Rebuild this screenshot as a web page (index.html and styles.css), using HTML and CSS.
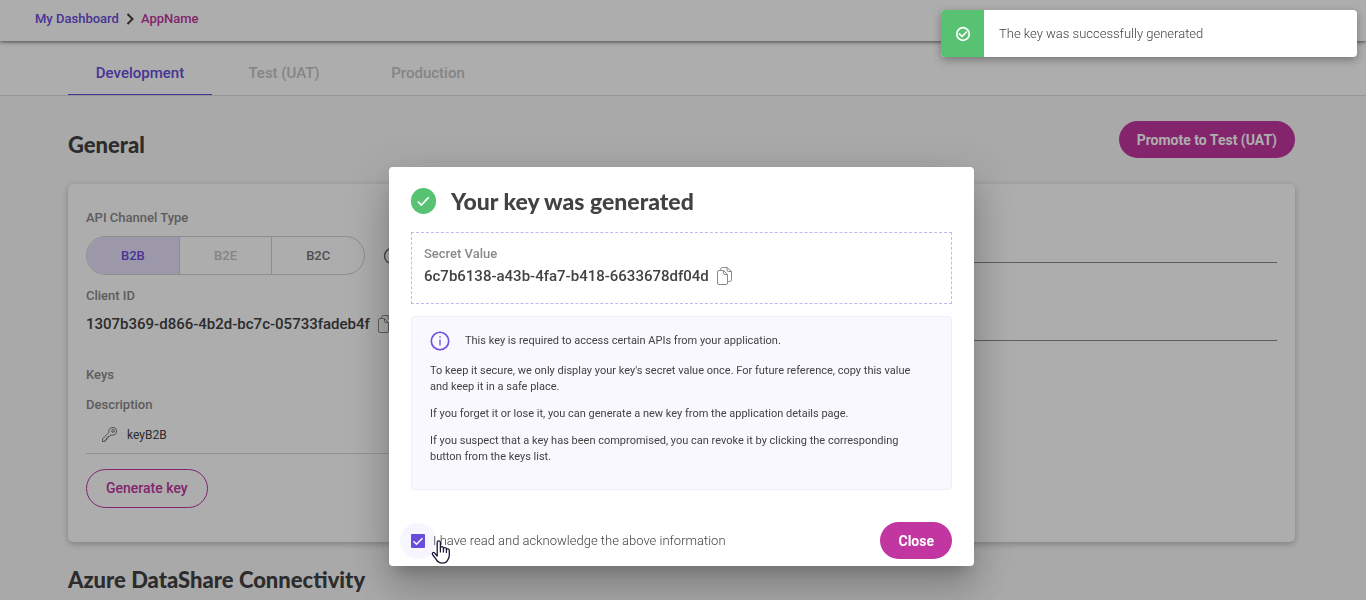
FILE: index.html
```
<!DOCTYPE html>
<html lang="en">
<head>
    <meta charset="UTF-8">
    <meta name="viewport" content="width=device-width, initial-scale=1">
    <title>AppName</title>
    <link rel="stylesheet" href="styles.css">
</head>
<body>
<header class="header">
    <nav class="breadcrumb" aria-label="Breadcrumb">
        <a href="#dashboard">My Dashboard</a>
        <svg width="8" height="12" viewBox="0 0 8 12"><path d="M1.5 1l5 5-5 5" fill="none" stroke="#424242" stroke-width="2"/></svg>
        <a href="#app" class="current">AppName</a>
    </nav>
</header>
<div class="tabs" role="tablist">
    <button type="button" class="tab active" role="tab" aria-selected="true">Development</button>
    <button type="button" class="tab" role="tab" disabled>Test (UAT)</button>
    <button type="button" class="tab" role="tab" disabled>Production</button>
</div>
<main class="content">
    <div class="section-head">
        <h2>General</h2>
        <button type="button" class="btn btn-primary">Promote to Test (UAT)</button>
    </div>
    <section class="card">
        <div class="card-left">
            <div class="label">API Channel Type</div>
            <div class="channel">
                <div class="toggle">
                    <button type="button" class="selected" aria-pressed="true">B2B</button>
                    <button type="button" disabled>B2E</button>
                    <button type="button" aria-pressed="false">B2C</button>
                </div>
                <svg width="18" height="18" viewBox="0 0 18 18" fill="none" stroke="#616161" stroke-width="1.3"><circle cx="9" cy="9" r="7.5"/><path d="M9 8v5M9 5v1.3"/></svg>
            </div>
            <div class="label">Client ID</div>
            <div class="value-row">
                <span class="value">1307b369-d866-4b2d-bc7c-05733fadeb4f</span>
                <button type="button" class="icon-btn" aria-label="Copy client ID">
                    <svg width="15" height="18" viewBox="0 0 15 18" fill="none" stroke="#8a8a8a"><path d="M3.5 3.5v-1a2 2 0 0 1 2-2H10l4.5 4v8a2 2 0 0 1-2 2H11M10 .5V3a1.5 1.5 0 0 0 1.5 1.5h3M2 3.5h4.5l4 4V16A1.5 1.5 0 0 1 9 17.5H2A1.5 1.5 0 0 1 .5 16V5A1.5 1.5 0 0 1 2 3.5zM6.5 3.5V6A1.5 1.5 0 0 0 8 7.5h2.5"/></svg>
                </button>
            </div>
            <div class="label keys-label">Keys</div>
            <table class="keys">
                <thead>
                    <tr><th class="label">Description</th></tr>
                </thead>
                <tbody>
                    <tr>
                        <td>
                            <div class="key-name">
                                <svg width="15" height="15" viewBox="0 0 15 15" fill="none" stroke="#757575"><path d="M8 1.5Q9 .5 11 .5q3.500 0 3.500 3.500 0 2-1.200 3.200-1.800 1.600-4.300.8L7.500 9.500H6v1.700H4.500V13H3v1.500H.5V12l6.300-6.300Q6.200 3.200 8 1.500z"/><circle cx="11" cy="4" r="1.300"/></svg>
                                <span>keyB2B</span>
                            </div>
                        </td>
                    </tr>
                </tbody>
            </table>
            <button type="button" class="btn btn-outline">Generate key</button>
        </div>
        <div class="card-right">
            <input type="text" class="field" aria-label="Application name">
            <input type="text" class="field" aria-label="Application description">
        </div>
    </section>
    <h2>Azure DataShare Connectivity</h2>
</main>

<div class="overlay">
    <div class="modal" role="dialog" aria-modal="true" aria-labelledby="modal-title">
        <div class="modal-title">
            <svg width="25" height="26" viewBox="0 0 25 26"><rect width="25" height="26" rx="12.5" fill="#57c271"/><path d="M6.800 13.500l3.500 3.500 7.400-7.700" fill="none" stroke="#fff" stroke-width="1.700"/></svg>
            <h2 id="modal-title">Your key was generated</h2>
        </div>
        <div class="secret">
            <div class="label">Secret Value</div>
            <div class="value-row">
                <span class="value">6c7b6138-a43b-4fa7-b418-6633678df04d</span>
                <button type="button" class="icon-btn" aria-label="Copy secret value">
                    <svg width="15" height="18" viewBox="0 0 15 18" fill="none" stroke="#8a8a8a"><path d="M3.5 3.5v-1a2 2 0 0 1 2-2H10l4.5 4v8a2 2 0 0 1-2 2H11M10 .5V3a1.5 1.5 0 0 0 1.5 1.5h3M2 3.5h4.5l4 4V16A1.5 1.5 0 0 1 9 17.5H2A1.5 1.5 0 0 1 .5 16V5A1.5 1.5 0 0 1 2 3.5zM6.5 3.5V6A1.5 1.5 0 0 0 8 7.5h2.5"/></svg>
                </button>
            </div>
        </div>
        <div class="info">
            <div class="info-head">
                <svg width="20" height="20" viewBox="0 0 20 20" fill="none" stroke="#6a4ddb"><circle cx="10" cy="10" r="8.700" stroke-width="1.600"/><path d="M10 8.500v6M10 5.200v1.600" stroke-width="1.300"/></svg>
                <span>This key is required to access certain APIs from your application.</span>
            </div>
            <p>To keep it secure, we only display your key's secret value once. For future reference, copy this value and keep it in a safe place.</p>
            <p>If you forget it or lose it, you can generate a new key from the application details page.</p>
            <p>If you suspect that a key has been compromised, you can revoke it by clicking the corresponding button from the keys list.</p>
        </div>
        <div class="modal-footer">
            <div class="ack">
                <input type="checkbox" id="ack" checked>
                <label for="ack">I have read and acknowledge the above information</label>
                <svg class="pointer" width="20" height="25" viewBox="0 0 20 25"><path d="M6.200 13.500V2.500a1.600 1.600 0 0 1 3.200 0V8a1.500 1.500 0 0 1 3 .3v.6a1.500 1.500 0 0 1 3 .4v.6a1.500 1.500 0 0 1 2.900.500v5.100c0 2-1 3.500-1.700 4.700-1 2-2.600 2.900-5.100 2.900-3.200 0-5-1.200-6.500-4L1.500 14.500c-.8-1.500.8-2.700 2-1.700l2.700 3.200z" fill="#fff" stroke="#1b1836" stroke-width="1.300" stroke-linejoin="round"/><path d="M9.400 8v4.500M12.400 9v3.500M15.400 10v3" stroke="#1b1836" stroke-width="1.200"/></svg>
            </div>
            <button type="button" class="btn btn-primary">Close</button>
        </div>
    </div>
</div>

<div class="toast" role="status">
    <div class="toast-icon">
        <svg width="16" height="16" viewBox="0 0 16 16" fill="none" stroke="#fff" stroke-width="1.700"><circle cx="8" cy="8" r="6.300"/><path d="M3.800 7.300l3.200 3.200 5-5"/></svg>
    </div>
    <div class="toast-text">The key was successfully generated</div>
</div>
</body>
</html>
```
FILE: styles.css
```
* {
    box-sizing: border-box;
    margin: 0;
    padding: 0;
}

body {
    background-color: #fafafa;
    color: #424242;
    font-family: Roboto, "Liberation Sans", sans-serif;
    font-size: 14px;
    line-height: 20px;
}

button, input {
    font-family: inherit;
    font-size: inherit;
}

button {
    background: none;
    border: 0;
    cursor: pointer;
}

svg {
    display: block;
    flex-shrink: 0;
}

h2 {
    font-family: Lato, "Open Sans", sans-serif;
    font-size: 22px;
    line-height: 28px;
    font-weight: 900;
}

/* header */
.header {
    height: 41px;
    padding: 9px 35px;
    background-color: #fff;
    box-shadow: 0 1px 4px rgba(0, 0, 0, 0.6);
    position: relative;
}

.breadcrumb {
    display: flex;
    align-items: center;
    gap: 7px;
    font-size: 13px;
    font-weight: 500;
}

.breadcrumb a {
    color: #6a4ddb;
    text-decoration: none;
}

.breadcrumb .current {
    color: #c136a0;
}

.tabs {
    display: flex;
    height: 55px;
    padding: 0 68px;
    background-color: #fff;
    border-bottom: 1px solid #dcdcdc;
}

.tab {
    width: 144px;
    padding-top: 11px;
    color: #c4c4c4;
    font-size: 15px;
    font-weight: 500;
    border-bottom: 1px solid transparent;
}

.tab.active {
    color: #6a4ddb;
    border-bottom-color: #6a4ddb;
}

/* page content */
.content {
    padding: 25px 71px 20px 68px;
}

.section-head {
    display: flex;
    align-items: flex-start;
    justify-content: space-between;
    margin-bottom: 25px;
}

.section-head h2 {
    padding-top: 10px;
}

.btn {
    height: 37px;
    padding: 0 18px;
    border-radius: 19px;
    font-size: 14px;
}

.btn-primary {
    background-color: #c136a0;
    color: #fff;
    font-weight: 700;
}

.btn-outline {
    height: 39px;
    padding: 0 19px;
    border: 1px solid #c136a0;
    border-radius: 20px;
    color: #c136a0;
    font-weight: 500;
}

.card {
    display: grid;
    grid-template-columns: 1fr 1fr;
    gap: 40px;
    padding: 24px 18px 34px;
    margin-bottom: 24px;
    background-color: #fff;
    border-radius: 5px;
    box-shadow: 0 2px 6px rgba(0, 0, 0, 0.25);
}

.label {
    color: #8a8a8a;
    font-size: 13px;
    font-weight: 500;
    text-align: left;
}

.channel {
    display: flex;
    align-items: center;
    gap: 18px;
    margin: 8px 0 11px;
}

.toggle {
    display: flex;
    width: 279px;
    height: 39px;
    border: 1px solid #d0d0d0;
    border-radius: 20px;
    overflow: hidden;
}

.toggle button {
    flex: 1;
    color: #757575;
    font-size: 13px;
    font-weight: 500;
}

.toggle button + button {
    border-left: 1px solid #d0d0d0;
}

.toggle button:disabled {
    color: #c4c4c4;
}

.toggle .selected {
    background-color: #e6e1fb;
    color: #6a4ddb;
}

.value-row {
    display: flex;
    align-items: center;
    gap: 8px;
}

.value {
    font-size: 15px;
    font-weight: 500;
}

.card .value-row {
    margin: 8px 0 31px;
}

.keys-label {
    margin-bottom: 10px;
}

.keys {
    width: 100%;
    border-collapse: collapse;
    margin-bottom: 15px;
}

.keys td {
    height: 38px;
    padding-top: 2px;
    border-bottom: 1px solid #d8d8d8;
    font-size: 12px;
}

.key-name {
    display: flex;
    align-items: center;
    gap: 10px;
    padding-left: 16px;
}

.card-right {
    display: flex;
    flex-direction: column;
    gap: 38px;
    padding-top: 15px;
}

.field {
    height: 40px;
    border: 0;
    border-bottom: 1px solid #8a8a8a;
    background: none;
}

/* modal */
.overlay {
    position: fixed;
    inset: 0;
    display: flex;
    align-items: flex-start;
    justify-content: center;
    padding: 167px 19px 0 16px;
    background-color: rgba(0, 0, 0, 0.32);
}

.modal {
    width: 100%;
    max-width: 585px;
    padding: 20px 22px 7px;
    background-color: #fff;
    border-radius: 4px;
    box-shadow: 0 11px 15px -7px rgba(0, 0, 0, 0.2), 0 24px 38px 3px rgba(0, 0, 0, 0.14), 0 9px 46px 8px rgba(0, 0, 0, 0.12);
}

.modal-title {
    display: flex;
    align-items: center;
    gap: 15px;
    margin-bottom: 17px;
}

.modal-title h2 {
    font-size: 23px;
}

.secret {
    height: 72px;
    padding: 11px 12px;
    margin-bottom: 12px;
    border: 1px dashed #c2b8f0;
}

.secret .value-row {
    margin-top: 2px;
}

.info {
    padding: 13px 24px 24px 18px;
    border: 1px solid #f0eefa;
    border-radius: 4px;
    background-color: #f9f8fe;
    font-size: 11px;
    line-height: 16px;
}

.info-head {
    display: flex;
    align-items: center;
    gap: 15px;
    min-height: 22px;
}

.info p {
    margin-top: 11px;
}

.modal-footer {
    display: flex;
    align-items: center;
    justify-content: space-between;
    margin-top: 32px;
}

.ack {
    display: flex;
    align-items: center;
    gap: 8px;
    position: relative;
    font-size: 13px;
    font-weight: 300;
}

.ack input {
    appearance: none;
    width: 14px;
    height: 14px;
    border-radius: 1px;
    background: #6a4ddb url("data:image/svg+xml,%3Csvg xmlns='http://www.w3.org/2000/svg' viewBox='0 0 14 14'%3E%3Cpath d='M2.500 7.200l3 3 6-6' fill='none' stroke='%23fff' stroke-width='1.400'/%3E%3C/svg%3E");
    position: relative;
    z-index: 1;
}

/* ripple behind the checkbox */
.ack::before {
    content: "";
    position: absolute;
    left: -11px;
    top: -8px;
    width: 36px;
    height: 36px;
    border-radius: 50%;
    background-color: #f7f5fe;
}

.ack label {
    position: relative;
}

.pointer {
    position: absolute;
    left: 20px;
    top: 9px;
    z-index: 2;
}

/* toast */
.toast {
    position: fixed;
    top: 10px;
    right: 9px;
    display: flex;
    width: 416px;
    min-height: 47px;
    background-color: #fff;
    border-radius: 4px;
    box-shadow: 0 3px 8px rgba(0, 0, 0, 0.3);
    overflow: hidden;
}

.toast-icon {
    display: flex;
    align-items: center;
    justify-content: center;
    width: 43px;
    background-color: #57c271;
}

.toast-text {
    align-self: center;
    padding: 0 15px;
    font-size: 13px;
    font-weight: 300;
}
```
